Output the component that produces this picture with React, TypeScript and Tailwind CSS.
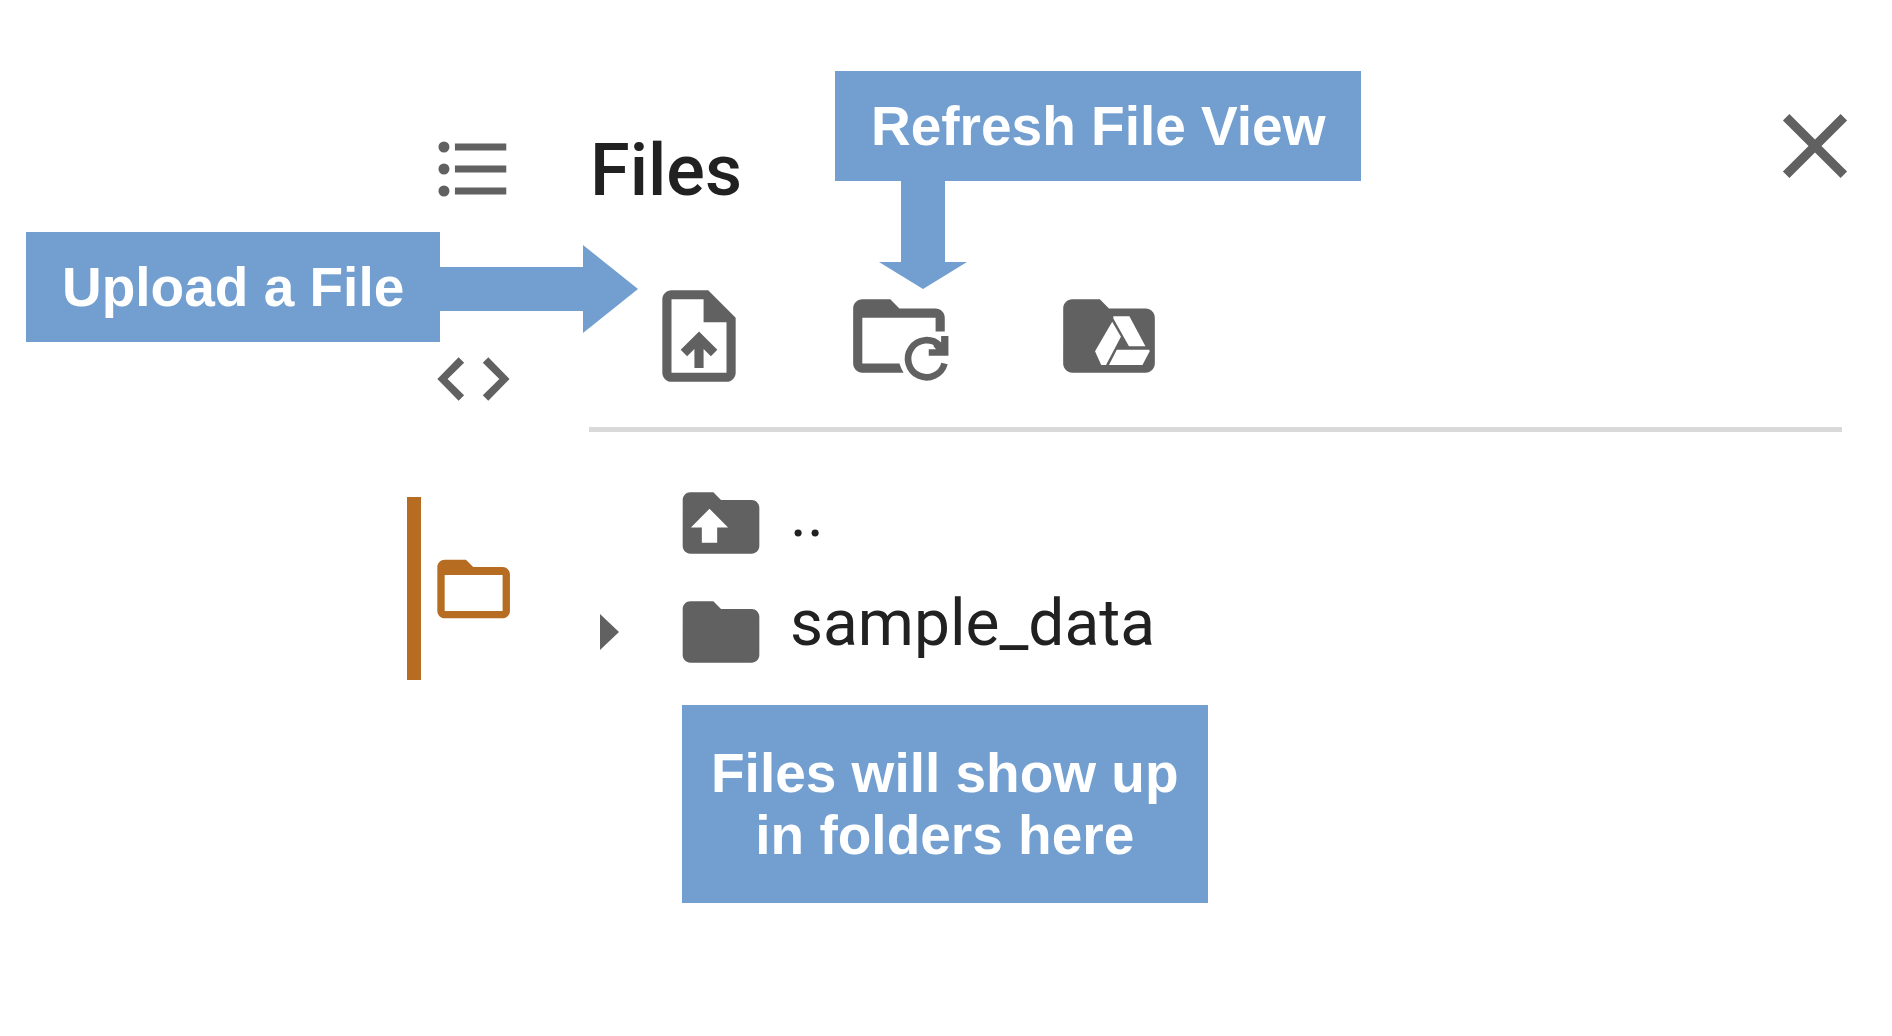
import type { ReactNode } from 'react';

const FOLDER =
  'M10 4H4c-1.1 0-1.99.9-1.99 2L2 18c0 1.1.9 2 2 2h16c1.1 0 2-.9 2-2V8c0-1.1-.9-2-2-2h-8l-2-2z';

function ListIcon() {
  return (
    <svg viewBox="0 0 24 24" className="size-22" fill="currentColor" aria-hidden="true">
      <circle cx="3.8" cy="6" r="1.5" />
      <circle cx="3.8" cy="12" r="1.5" />
      <circle cx="3.8" cy="18" r="1.5" />
      <path d="M6.8 5.05h14v1.9h-14zM6.8 11.05h14v1.9h-14zM6.8 17.05h14v1.9h-14z" />
    </svg>
  );
}

function CodeIcon() {
  return (
    <svg viewBox="0 0 24 24" className="size-22" fill="currentColor" aria-hidden="true">
      <path d="M9.3 16.4 4.8 12l4.5-4.4L7.8 6.1 2 12l5.8 5.9 1.5-1.5zm5.1 0 4.5-4.4-4.5-4.4 1.5-1.5 5.8 5.9-5.8 5.9-1.5-1.5z" />
    </svg>
  );
}

function FolderOutlineIcon() {
  return (
    <svg viewBox="0 0 24 24" className="size-22" fill="currentColor" aria-hidden="true">
      <path d="M19.8 6h-8l-2-2H4c-1.1 0-2 .9-2 2v12c0 1.1.9 2 2 2h15.8c1.1 0 2-.9 2-2V8c0-1.1-.9-2-2-2zm0 12H4V8.2h15.8V18z" />
    </svg>
  );
}

function CloseIcon() {
  return (
    <svg viewBox="0 0 24 24" className="size-[110px]" fill="currentColor" aria-hidden="true">
      <path d="M19 6.41 17.59 5 12 10.59 6.41 5 5 6.41 10.59 12 5 17.59 6.41 19 12 13.41 17.59 19 19 17.59 13.41 12z" />
    </svg>
  );
}

function UploadFileIcon() {
  return (
    <svg viewBox="0 0 24 24" className="size-[110px]" fill="currentColor" aria-hidden="true">
      <path d="M14 2H6c-1.1 0-2 .9-2 2v16c0 1.1.9 2 2 2h12c1.1 0 2-.9 2-2V8l-6-6zm4 18H6V4h7v5h5v11z" />
      <path d="M8 15.01l1.41 1.41L11 14.84V19h2v-4.16l1.59 1.59L16 15.01 12.01 11 8 15.01z" />
    </svg>
  );
}

function RefreshFolderIcon() {
  return (
    <svg viewBox="0 0 26.2 24" className="h-[110px] w-[120px]" fill="currentColor" aria-hidden="true">
      <path d="M4 4h6.1l2 2H20c1.1 0 2 .9 2 2v3h-2V8H4v10h8.1q.3 1 .9 2H4c-1.1 0-2-.9-2-2V6c0-1.1.9-2 2-2z" />
      <path d="M21.95 18A4.05 4.05 0 1 1 20.9 14.1" fill="none" stroke="currentColor" strokeWidth="1.45" />
      <path d="M22.8 12v4.3h-4.3v-1.4h1.6l-.6-.7.9-1 .8.5V12z" />
    </svg>
  );
}

function DriveFolderIcon() {
  return (
    <svg viewBox="0 0 24 24" className="size-[110px]" fill="currentColor" aria-hidden="true">
      <path d={FOLDER} />
      <g className="fill-white">
        <path d="M12.95 7.7h3.5l3.5 6.55h-3.6L12.95 8.2z" />
        <path d="M12.7 8.9l1.9 3.25-3.25 6.15H10.3L8.95 15.35z" />
        <path d="M13.7 15h7.1l.05.4-1.55 2.9H12z" />
      </g>
    </svg>
  );
}

function RowFolderIcon({ up = false }: { up?: boolean }) {
  return (
    <svg viewBox="0 0 24 24" className="size-[92px] shrink-0 text-[#616161]" fill="currentColor" aria-hidden="true">
      <path d={FOLDER} />
      {up && <path className="fill-white" d="M9 8.3l4.85 4.85H11v4H7v-4H4.15z" />}
    </svg>
  );
}

function RailItem({ label, active = false, children }: { label: string; active?: boolean; children: ReactNode }) {
  return (
    <button
      type="button"
      aria-label={label}
      aria-pressed={active}
      className={
        active
          ? 'flex h-[183px] items-center border-l-14 border-[#b66d22] pl-[9px] text-[#b66d22]'
          : 'flex h-[183px] items-center border-l-14 border-transparent pl-[9px] text-[#616161]'
      }
    >
      {children}
    </button>
  );
}

function CalloutLabel({ roomy = false, children }: { roomy?: boolean; children: ReactNode }) {
  return (
    <p
      className={`bg-[#729fcf] text-center font-['Liberation_Sans',sans-serif] text-[55px] leading-[62px] font-bold whitespace-nowrap text-white ${
        roomy ? 'px-[29px] py-[37px]' : 'px-9 py-6'
      }`}
    >
      {children}
    </p>
  );
}

export default function App() {
  return (
    <div className="relative flex min-h-screen bg-white font-[Roboto,sans-serif] text-[#212121]">
      <nav aria-label="Sidebar" className="flex w-[589px] shrink-0 flex-col items-start gap-[27px] pt-[77px] pl-[407px]">
        <RailItem label="Table of contents">
          <ListIcon />
        </RailItem>
        <RailItem label="Code snippets">
          <CodeIcon />
        </RailItem>
        <RailItem label="Files" active>
          <FolderOutlineIcon />
        </RailItem>
      </nav>

      <main className="flex min-w-0 flex-1 flex-col pt-[91px] pr-[50px]">
        <header className="-mr-7 flex h-[122px] items-start justify-between pl-px">
          <h1 className="self-end text-[72px] leading-[84px] font-medium">Files</h1>
          <button type="button" aria-label="Close" className="text-[#616161]">
            <CloseIcon />
          </button>
        </header>

        <div className="mt-17 flex gap-[90px] border-b-5 border-[#d9d9d9] pb-9 pl-[55px] text-[#616161]">
          <button type="button" aria-label="Upload a file">
            <UploadFileIcon />
          </button>
          <button type="button" aria-label="Refresh file view">
            <RefreshFolderIcon />
          </button>
          <button type="button" aria-label="Mount Drive">
            <DriveFolderIcon />
          </button>
        </div>

        <ul className="mt-[45px] flex flex-col gap-[17px] text-[64px] leading-[75px]">
          <li className="flex items-center pl-[86px]">
            <button type="button" className="flex items-start gap-[23px]">
              <RowFolderIcon up />
              <span>..</span>
            </button>
          </li>
          <li className="flex items-center">
            <button type="button" aria-label="Expand sample_data" className="w-[86px] pl-[11px] text-[#616161]">
              <svg viewBox="0 0 19 36" className="h-9 w-[19px]" fill="currentColor" aria-hidden="true">
                <path d="M0 0l19 18L0 36z" />
              </svg>
            </button>
            <button type="button" className="flex items-start gap-[23px]">
              <RowFolderIcon />
              <span>sample_data</span>
            </button>
          </li>
        </ul>
      </main>

      <div className="absolute top-[232px] left-[26px] flex items-start">
        <CalloutLabel>Upload a File</CalloutLabel>
        <svg viewBox="0 0 198 88" className="mt-[13px] h-22 w-[198px] fill-[#729fcf]" aria-hidden="true">
          <path d="M0 22h143V0l55 44-55 44V66H0z" />
        </svg>
      </div>

      <div className="absolute top-[71px] left-[835px]">
        <CalloutLabel>Refresh File View</CalloutLabel>
        <svg viewBox="0 0 88 108" className="ml-11 h-27 w-22 fill-[#729fcf]" aria-hidden="true">
          <path d="M22 0h44v81h22l-44 27L0 81h22z" />
        </svg>
      </div>

      <div className="absolute top-[705px] left-[682px]">
        <CalloutLabel roomy>
          Files will show up
          <br />
          in folders here
        </CalloutLabel>
      </div>
    </div>
  );
}
